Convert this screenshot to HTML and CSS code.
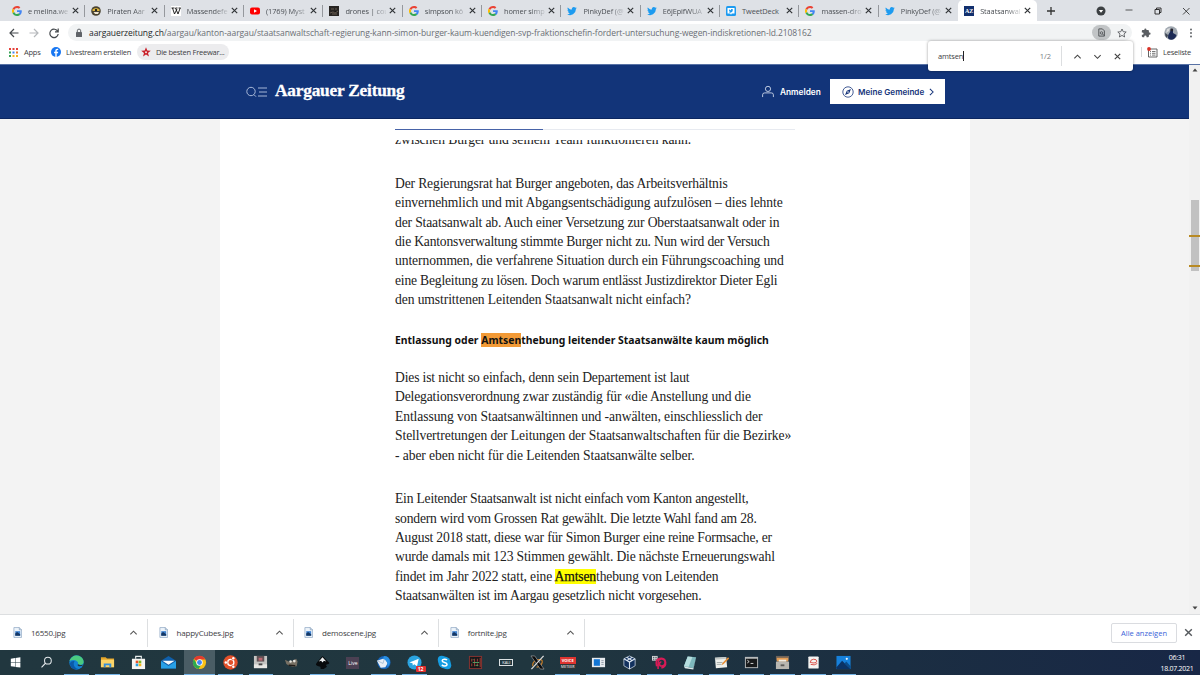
FILE: index.html
```html
<!DOCTYPE html>
<html lang="de">
<head>
<meta charset="utf-8">
<title>Aargauer Zeitung</title>
<link rel="stylesheet" href="styles.css">
</head>
<body>
<svg class="defs" aria-hidden="true">
  <symbol id="google" viewBox="0 0 48 48"><path fill="#EA4335" d="M24 9.5c3.5 0 6.7 1.2 9.200 3.600l6.900-6.900C35.900 2.400 30.500 0 24 0 14.600 0 6.500 5.400 2.600 13.200l8 6.200C12.400 13.700 17.700 9.500 24 9.500z"/><path fill="#4285F4" d="M47 24.600c0-1.600-.2-3.100-.4-4.600H24v9h12.900c-.6 3-2.300 5.500-4.800 7.200l7.700 6C44.400 38 47 32 47 24.600z"/><path fill="#FBBC05" d="M10.500 28.600a14.500 14.500 0 0 1 0-9.200l-8-6.200a24 24 0 0 0 0 21.600z"/><path fill="#34A853" d="M24 48c6.500 0 11.900-2.100 15.900-5.800l-7.700-6c-2.200 1.500-4.900 2.300-8.200 2.300-6.300 0-11.600-4.200-13.500-9.900l-8 6.200C6.500 42.600 14.600 48 24 48z"/></symbol>
  <symbol id="twitter" viewBox="0 0 24 24"><path fill="#1d9bf0" d="M23.600 4.900c-.8.4-1.700.6-2.700.8 1-.6 1.700-1.500 2-2.600-.9.5-1.900.9-3 1.100a4.800 4.800 0 0 0-8.200 4.400C7.800 8.400 4.300 6.500 1.900 3.600c-1.300 2.200-.7 5 1.500 6.400-.8 0-1.500-.2-2.200-.6 0 2.300 1.600 4.300 3.800 4.800-.7.200-1.400.2-2.200.1.600 1.900 2.400 3.300 4.500 3.300A9.600 9.600 0 0 1 .3 19.600 13.500 13.500 0 0 0 21.200 7.500c.9-.7 1.800-1.600 2.400-2.600z"/></symbol>
  <symbol id="x" viewBox="0 0 10 10"><path d="M2 2l6 6M8 2l-6 6" fill="none" stroke="currentColor" stroke-width="1.300"/></symbol>
  <symbol id="up" viewBox="0 0 10 10"><path d="M1.500 7L5 3.500 8.500 7" fill="none" stroke="currentColor" stroke-width="1.200"/></symbol>
  <symbol id="down" viewBox="0 0 10 10"><path d="M1.500 3.500L5 7l3.500-3.500" fill="none" stroke="currentColor" stroke-width="1.200"/></symbol>
  <symbol id="jpg" viewBox="0 0 10 12"><path d="M1 .5h6l2.500 2.500v8.500H1z" fill="#eef4fa" stroke="#8fa9c4" stroke-width=".8"/><path d="M7 .5V3h2.500" fill="none" stroke="#7793b0" stroke-width=".7"/><path d="M2.500 4.500h5.500v5H2.500z" fill="#3f82d0"/><path d="M2.500 7l2-1.500L8 8v1.500H2.500z" fill="#153765"/></symbol>
</svg>

<div class="window">
  <div class="tabstrip">
    <div class="tab"><svg class="fav"><use href="#google"/></svg><span>e melina.we</span><svg class="close"><use href="#x"/></svg></div>
    <div class="tab"><svg class="fav" viewBox="0 0 10 10"><circle cx="5" cy="5" r="4.800" fill="#4a4330"/><path d="M1 4q4-4 8 0L8 5H2z" fill="#e2b93c"/><path d="M2.500 6h5.500L7 8H4z" fill="#eee5cf"/><circle cx="5" cy="4" r="1.200" fill="#222"/></svg><span>Piraten Aar</span><svg class="close"><use href="#x"/></svg></div>
    <div class="tab"><svg class="fav" viewBox="0 0 10 10"><rect width="10" height="10" fill="#fff"/><path d="M.5 2h3M4.500 2h2M7.500 2h2.300M1.500 2l2 6L6 3M4.500 2l2.500 6L9.200 2" fill="none" stroke="#111" stroke-width=".9"/></svg><span>Massendefe</span><svg class="close"><use href="#x"/></svg></div>
    <div class="tab"><svg class="fav" viewBox="0 0 10 10"><rect y="1.500" width="10" height="7" rx="2" fill="#f00"/><path d="M4 3.300v3.400L7 5z" fill="#fff"/></svg><span>(1769) Myst</span><svg class="close"><use href="#x"/></svg></div>
    <div class="tab"><svg class="fav" viewBox="0 0 10 10"><rect width="10" height="10" fill="#272422"/><path d="M1 7l3-1 2 1 3-2M2 3h3M7 2v2M3 8h5" stroke="#776b5e" stroke-width=".8"/></svg><span>drones | cou</span><svg class="close"><use href="#x"/></svg></div>
    <div class="tab"><svg class="fav"><use href="#google"/></svg><span>simpson kö</span><svg class="close"><use href="#x"/></svg></div>
    <div class="tab"><svg class="fav"><use href="#google"/></svg><span>homer simp</span><svg class="close"><use href="#x"/></svg></div>
    <div class="tab"><svg class="fav"><use href="#twitter"/></svg><span>PinkyDef (@</span><svg class="close"><use href="#x"/></svg></div>
    <div class="tab"><svg class="fav"><use href="#twitter"/></svg><span>E6jEpifWUA</span><svg class="close"><use href="#x"/></svg></div>
    <div class="tab"><svg class="fav" viewBox="0 0 10 10"><rect width="10" height="10" rx="1.500" fill="#1d9bf0"/><path d="M1.500 2h7v5.500H5.800L5 8.800l-.8-1.300H1.500z" fill="#fff"/><use href="#twitter" x="2.700" y="2.500" width="4.600" height="4.600"/></svg><span>TweetDeck</span><svg class="close"><use href="#x"/></svg></div>
    <div class="tab"><svg class="fav"><use href="#google"/></svg><span>massen-dro</span><svg class="close"><use href="#x"/></svg></div>
    <div class="tab last"><svg class="fav"><use href="#twitter"/></svg><span>PinkyDef (@</span><svg class="close"><use href="#x"/></svg></div>
    <div class="tab active"><i class="fav az">AZ</i><span>Staatsanwal</span><svg class="close"><use href="#x"/></svg></div>
    <svg class="newtab" viewBox="0 0 10 10"><path d="M5 1v8M1 5h8" stroke="#333" stroke-width="1.300"/></svg>
    <div class="wincontrols">
      <svg viewBox="0 0 10 10"><circle cx="5" cy="5" r="4.500" fill="#3c4043"/><path d="M2.800 4h4.400L5 6.800z" fill="#fff"/></svg>
      <svg viewBox="0 0 10 10"><path d="M1.500 4h7" stroke="#333" stroke-width=".8"/></svg>
      <svg viewBox="0 0 10 10"><path d="M2 3.500h4.500V8H2zM3.500 3.500V2H8v4.500H6.500" fill="none" stroke="#222" stroke-width=".9"/></svg>
      <svg viewBox="0 0 10 10"><path d="M2 2l6.500 6.500M8.500 2L2 8.500" stroke="#222" stroke-width=".8"/></svg>
    </div>
  </div>

  <div class="toolbar">
    <svg class="nav" viewBox="0 0 12 12"><path d="M10.500 6h-8M6 2L2 6l4 4" fill="none" stroke="#45494d" stroke-width="1.200"/></svg>
    <svg class="nav" viewBox="0 0 12 12"><path d="M1.500 6h8M6 2l4 4-4 4" fill="none" stroke="#b5b8bb" stroke-width="1.200"/></svg>
    <svg class="nav" viewBox="0 0 12 12"><path d="M9.800 4.500A4.200 4.200 0 1 0 10.200 7M10.200 1.500v3.300H7" fill="none" stroke="#45494d" stroke-width="1.200"/></svg>
    <div class="omnibox">
      <svg class="lock" viewBox="0 0 8 10"><rect x="1" y="4" width="6" height="5" rx=".6" fill="#5f6368"/><path d="M2.300 4V2.800a1.700 1.700 0 0 1 3.400 0V4" fill="none" stroke="#5f6368"/></svg>
      <div class="url"><b>aargauerzeitung.ch</b>/aargau/kanton-aargau/staatsanwaltschaft-regierung-kann-simon-burger-kaum-kuendigen-svp-fraktionschefin-fordert-untersuchung-wegen-indiskretionen-ld.2108162</div>
      <div class="findchip"><svg viewBox="0 0 10 10"><path d="M2 1h4l2.200 2.200V9H2z" fill="none" stroke="#4a4d50"/><circle cx="5" cy="5.500" r="1.400" fill="none" stroke="#4a4d50" stroke-width=".9"/><path d="M6 6.500L8 8.500" stroke="#4a4d50"/></svg></div>
      <svg class="star" viewBox="0 0 10 10"><path d="M5 1l1.200 2.700 3 .3L7 6l.6 3L5 7.400 2.400 9 3 6 .8 4l3-.3z" fill="none" stroke="#4a4d50" stroke-width=".8"/></svg>
    </div>
    <svg class="puzzle" viewBox="0 0 24 24"><path fill="#5a5e62" d="M20.500 11H19V7a2 2 0 0 0-2-2h-4V3.500a2.500 2.500 0 0 0-5 0V5H4a2 2 0 0 0-2 2v3.800h1.500a2.700 2.700 0 0 1 0 5.400H2V20a2 2 0 0 0 2 2h3.800v-1.500a2.700 2.700 0 0 1 5.400 0V22H17a2 2 0 0 0 2-2v-4h1.500a2.500 2.500 0 0 0 0-5z"/></svg>
    <svg class="avatar" viewBox="0 0 14 14"><circle cx="7" cy="7" r="6.800" fill="#a0a8b0"/><path d="M4 12q0-4 2-6l1-3 2 1v3l3.500 2q-1.500 5-5.500 4.800Q4.500 13.500 4 12z" fill="#1c2a55"/><path d="M1 7l3 2-1 3Q.8 10 1 7z" fill="#3f4652"/><path d="M3 3l3-1-1 3-3 2z" fill="#d9dadb"/><circle cx="7.800" cy="4" r="1.400" fill="#24232d"/></svg>
    <svg class="dots" viewBox="0 0 4 12"><circle cx="2" cy="2.500" r=".9"/><circle cx="2" cy="6" r=".9"/><circle cx="2" cy="9.500" r=".9"/></svg>
  </div>

  <div class="bookmarks">
    <svg class="apps" viewBox="0 0 9 9"><path fill="#e5413a" d="M0 0h2v2H0zM3.500 0h2v2h-2zM7 0h2v2H7z"/><path fill="#37a456" d="M0 3.500h2v2H0z"/><path fill="#4285f4" d="M3.500 3.500h2v2h-2z"/><path fill="#e8792c" d="M7 3.500h2v2H7z"/><path fill="#37a456" d="M0 7h2v2H0z"/><path fill="#f2b51d" d="M3.500 7h2v2h-2zM7 7h2v2H7z"/></svg>
    <span class="bm-apps">Apps</span>
    <svg class="fb" viewBox="0 0 10 10"><circle cx="5" cy="5" r="5" fill="#1877f2"/><path d="M4.300 10V6.200H3.100V4.800h1.200V3.700c0-1.300.8-2 2-2h.9V3h-.7c-.6 0-.8.3-.8.800v1h1.500l-.2 1.400H5.700V10z" fill="#fff"/></svg>
    <span class="bm-live">Livestream erstellen</span>
    <div class="bm-chip"><svg viewBox="0 0 10 10"><path d="M5 .3l1.300 3.300 3.500.2L7 6l1 3.600L5 7.500 2 9.600 3 6 .2 3.800l3.500-.2z" fill="#c8202a"/><circle cx="5" cy="5.200" r="1" fill="#f6dcdc"/></svg><span>Die besten Freewar...</span></div>
    <div class="reading"><svg viewBox="0 0 11 11"><path d="M1.500 2h8.500v8H1.500z" fill="#fff" stroke="#555" stroke-width=".9"/><path d="M3 4.500h1M5 4.500h3.500M3 6.300h1M5 6.300h3.500M3 8.100h1M5 8.100h3.500" stroke="#555" stroke-width=".8"/><circle cx="2" cy="2" r="1.900" fill="#d93025"/></svg><span>Leseliste</span></div>
  </div>

  <div class="findbar">
    <span class="query">amtsen</span><i class="caret"></i><span class="count">1/2</span>
    <svg><use href="#up"/></svg><svg><use href="#down"/></svg><svg><use href="#x"/></svg>
  </div>

  <div class="viewport">
    <div class="page">
      <header class="site">
        <svg class="menu" viewBox="0 0 22 12"><circle cx="5" cy="5.500" r="4.200"/><path d="M8 8.700l2 2M12 2h9M13 6h8M12 10h9"/></svg>
        <div class="logo">Aargauer Zeitung</div>
        <div class="login"><svg viewBox="0 0 14 14"><circle cx="7" cy="4.200" r="2.800"/><path d="M1.200 13V10.500q0-2 2.300-2h7q2.300 0 2.300 2V13"/></svg>Anmelden</div>
        <div class="gemeinde"><svg viewBox="0 0 12 12"><circle cx="6" cy="6" r="5.200" fill="none" stroke="#15347a" stroke-width=".8"/><path d="M9 3L7.200 7.200 3 9l1.800-4.200z" fill="#15347a"/><circle cx="6" cy="6" r=".8" fill="#fff"/></svg><span>Meine Gemeinde</span><svg class="chev" viewBox="0 0 6 10"><path d="M1 1l4 4-4 4" fill="none" stroke="#15347a" stroke-width="1.300"/></svg></div>
      </header>
      <main>
        <div class="progress"><i></i></div>
        <article>
          <p class="cut">zwischen Burger und seinem Team funktionieren kann.</p>
          <p>Der Regierungsrat hat Burger angeboten, das Arbeitsverhältnis<br><span class="loose">einvernehmlich und mit Abgangsentschädigung aufzulösen – dies lehnte</span><br>der Staatsanwalt ab. Auch einer Versetzung zur Oberstaatsanwalt oder in<br><span class="tight">die Kantonsverwaltung stimmte Burger nicht zu. Nun wird der Versuch</span><br><span class="loose">unternommen, die verfahrene Situation durch ein Führungscoaching und</span><br><span class="tight">eine Begleitung zu lösen. Doch warum entlässt Justizdirektor Dieter Egli</span><br><span class="loose">den umstrittenen Leitenden Staatsanwalt nicht einfach?</span></p>
          <h2>Entlassung oder <mark class="current">Amtsen</mark>thebung leitender Staatsanwälte kaum möglich</h2>
          <p>Dies ist nicht so einfach, denn sein Departement ist laut<br>Delegationsverordnung zwar zuständig für «die Anstellung und die<br><span class="loose">Entlassung von Staatsanwältinnen und -anwälten, einschliesslich der</span><br><span class="loose">Stellvertretungen der Leitungen der Staatsanwaltschaften für die Bezirke»</span><br><span class="loose">- aber eben nicht für die Leitenden Staatsanwälte selber.</span></p>
          <p><span class="tight">Ein Leitender Staatsanwalt ist nicht einfach vom Kanton angestellt,</span><br><span class="tight">sondern wird vom Grossen Rat gewählt. Die letzte Wahl fand am 28.</span><br><span class="tight">August 2018 statt, diese war für Simon Burger eine reine Formsache, er</span><br>wurde damals mit 123 Stimmen gewählt. Die nächste Erneuerungswahl<br>findet im Jahr 2022 statt, eine <mark>Amtsen</mark>thebung von Leitenden<br>Staatsanwälten ist im Aargau gesetzlich nicht vorgesehen.</p>
        </article>
      </main>
    </div>
    <div class="scrollbar">
      <svg viewBox="0 0 6 4"><path d="M.5 3.500h5L3 .5z"/></svg>
      <div class="track"><div class="thumb"><i></i><i></i></div></div>
      <svg viewBox="0 0 6 4"><path d="M.5.5h5L3 3.500z"/></svg>
    </div>
  </div>

  <div class="downloads">
    <div class="dl"><svg class="file"><use href="#jpg"/></svg><span>16550.jpg</span><svg class="chev"><use href="#up"/></svg></div>
    <div class="dl"><svg class="file"><use href="#jpg"/></svg><span>happyCubes.jpg</span><svg class="chev"><use href="#up"/></svg></div>
    <div class="dl"><svg class="file"><use href="#jpg"/></svg><span>demoscene.jpg</span><svg class="chev"><use href="#up"/></svg></div>
    <div class="dl"><svg class="file"><use href="#jpg"/></svg><span>fortnite.jpg</span><svg class="chev"><use href="#up"/></svg></div>
    <div class="showall">Alle anzeigen</div>
    <svg class="dlclose"><use href="#x"/></svg>
  </div>

  <div class="taskbar">
    <div class="app"><svg viewBox="0 0 16 16"><path d="M3 4l4.500-.7v4.400H3zM8 3.200L13.200 2.500v5.200H8zM3 8.200h4.500v4.400L3 12zM8 8.200h5.200v5.200L8 12.700z" fill="#fff"/></svg></div>
    <div class="app"><svg viewBox="0 0 16 16"><circle cx="9.500" cy="6" r="3.600" fill="none" stroke="#e6ebee" stroke-width="1.100"/><path d="M7 8.700l-4.300 4.600" stroke="#e6ebee" stroke-width="1.200"/></svg></div>
    <div class="app run"><svg viewBox="0 0 16 16"><circle cx="8" cy="8" r="7.700" fill="#1382d3"/><path d="M.5 6.500C2 1 8-.8 12 1.500c3 1.700 4.500 5.500 3 7.700-1 1.300-4.500 1.500-5.500.3C11 6.500 5 3.500.5 6.500z" fill="#4acb80"/><path d="M6 7c-2 2-1 7 4 8-5 1.500-9-2-9-6 1-2.500 4-3 5-2z" fill="#0b5aa8"/><path d="M9.500 9.500c1.500 1.500 4 1.200 6 .5q-2 2.500-5 2-2-.5-1-2.500z" fill="#21363f"/></svg></div>
    <div class="app run"><svg viewBox="0 0 16 16"><path d="M1 2.500h5l1.500 1.300H15V13H1z" fill="#e5a62a"/><path d="M1 5h14v8H1z" fill="#fcd568"/><path d="M4 13V9h8v4h-2v-2H6v2z" fill="#338fdb"/></svg></div>
    <div class="app"><svg viewBox="0 0 16 16"><path d="M5 4V1.500h6V4" fill="none" stroke="#e9eeee" stroke-width="1.200"/><path d="M1 4h14v11H1z" fill="#f5f5f3"/><path d="M5 6h2.800v2.800H5z" fill="#ef5026"/><path d="M8.200 6H11v2.800H8.200z" fill="#7db928"/><path d="M5 9.200h2.800V12H5z" fill="#25a1e8"/><path d="M8.200 9.200H11V12H8.200z" fill="#f5b61d"/></svg></div>
    <div class="app"><svg viewBox="0 0 16 16"><path d="M0 6l8-5 8 5v8.500H0z" fill="#0f5faa"/><path d="M1.500 6h13L8 10.500z" fill="#f4f8fb"/><path d="M0 6.500l8 5.200 8-5.200v8H0z" fill="#28a0e6"/></svg></div>
    <div class="app run focus"><svg viewBox="0 0 16 16"><circle cx="8" cy="8" r="7" fill="#fbc116"/><path d="M8 8L2 4.300A7 7 0 0 1 14.200 4.700L8 4.800z" fill="#e33b2e"/><path d="M2 4.300A7 7 0 0 0 7 15l3-5.200-4.500.3z" fill="#2da94f"/><circle cx="8" cy="8" r="3.400" fill="#fff"/><circle cx="8" cy="8" r="2.600" fill="#4285f4"/></svg></div>
    <div class="app run"><svg viewBox="0 0 16 16"><circle cx="8" cy="8" r="7.700" fill="#e2502a"/><circle cx="8.300" cy="8" r="3.300" fill="none" stroke="#fff" stroke-width="1.400"/><path d="M10 5l1-2M4.500 8H3M10 11l1 2" stroke="#e2502a" stroke-width="2.500"/><g fill="#fff"><circle cx="11" cy="3.500" r="1.300"/><circle cx="3" cy="8" r="1.300"/><circle cx="11" cy="12.500" r="1.300"/></g></svg></div>
    <div class="app run"><svg viewBox="0 0 16 16"><rect x="1" y="1" width="14" height="13" fill="#c4c4c2"/><rect x="4" y="1" width="8" height="6" fill="#5d5053"/><path d="M6 3h4v3H6z" fill="#bc6770"/><path d="M1 10h14v4H1z" fill="#e6e6e3"/><path d="M6 9h4v2H6z" fill="#454545"/></svg></div>
    <div class="app"><svg viewBox="0 0 16 16"><path d="M1 5l4 2 4-1 4-2 1.500 3-1 5-4 .5-4-1-3-2z" fill="#777064"/><circle cx="7" cy="7" r="1.300" fill="#e5e4de"/><circle cx="11" cy="6.500" r="1.400" fill="#e5e4de"/><path d="M5 11l7 .5" stroke="#211d19" stroke-width="1.600"/></svg></div>
    <div class="app run"><svg viewBox="0 0 16 16"><path d="M8 1l7 7c1 2-2 1.500-3 2.500s2 1.500 0 2.500-2 2-4 2-3-1-2-2-5-1-5-3c0-1 6-8 7-9z" fill="#080b0d"/><path d="M8 2.500L12 7 9.500 6 8 8 6.500 6 4 7z" fill="#eef0f1"/></svg></div>
    <div class="app"><div class="badge live">Live</div></div>
    <div class="app run"><svg viewBox="0 0 16 16"><circle cx="8.500" cy="8" r="7" fill="#1767bd"/><path d="M1 6l8-2.500 3.500 5-2.500 4.500-5 .5z" fill="#e9eff6"/><path d="M1 6l6.500 3L9 3.500" fill="none" stroke="#9eb8d0" stroke-width=".8"/><path d="M9 1c6 0 8 8 3 12 1-5-1-8-5-9z" fill="#2990e4"/></svg></div>
    <div class="app run"><svg viewBox="0 0 16 16"><circle cx="8" cy="8" r="7.500" fill="#2aa3df"/><path d="M2.500 8l10-4-1.800 8-3-2.200-1.500 1.500-.3-2.600z" fill="#fff"/></svg><b class="count12">12</b></div>
    <div class="app"><svg viewBox="0 0 16 16"><circle cx="8" cy="8" r="6.500" fill="#159de2"/><circle cx="5" cy="5" r="4.200" fill="#159de2"/><circle cx="11" cy="11" r="4.200" fill="#159de2"/><path d="M10.700 5.500C9.500 4 5.500 4 5.500 6.200c0 2.500 5.200 1.300 5.200 3.700 0 2.300-4.200 2.400-5.500.5" fill="none" stroke="#fff" stroke-width="1.600"/></svg></div>
    <div class="app"><svg viewBox="0 0 16 16"><rect x="1.500" y="1.500" width="13" height="13" fill="#16191b" stroke="#8a3430"/><path d="M4 4v3M4 9v3M7 4v8M10 4v3M10 9v3M13 3v10" stroke="#bf4238" stroke-width=".9"/><path d="M5 8h7M5 5h1M8 11h3" stroke="#55a264"/></svg></div>
    <div class="app"><div class="badge kali">KALI</div></div>
    <div class="app"><svg viewBox="0 0 16 16"><path d="M3 12Q2 7 8 5q6-1 5 3t-6 5" fill="none" stroke="#ce7d20" stroke-width="1.200"/><path d="M1 1h4l10 14h-4z" fill="#0b0b0b" stroke="#b5b5b5" stroke-width=".6"/><path d="M14.500 1L1.500 15" stroke="#ddd" stroke-width="1.300"/></svg></div>
    <div class="app run"><div class="badge voice"><b>VOICE</b><span>METEER</span></div></div>
    <div class="app run"><svg viewBox="0 0 16 16"><rect x="1" y="3" width="14" height="10" fill="#e7ebef"/><rect x="3" y="4.500" width="6.500" height="7" fill="#1276d5"/><path d="M11 6h2.500M11 8h2.500M11 10h2.500" stroke="#7d8995" stroke-width=".8"/></svg></div>
    <div class="app run"><svg viewBox="0 0 16 16"><path d="M8 1l6 3v7.500L8 15l-6-3.500V4z" fill="#12315e" stroke="#cfdae8" stroke-width=".8"/><path d="M2 4l6 3.500L14 4M8 7.500V15M5 2.500l6 3.500M11 2.500L5 6" fill="none" stroke="#d9e4ef" stroke-width="1.200"/></svg></div>
    <div class="app run"><svg viewBox="0 0 16 16"><path d="M0 1h6v5H0z" fill="#d6d8db"/><path d="M1 2.500h1.500M3.500 2.500H5M1 4.500h1.500M3.500 4.500H5" stroke="#39434d"/><path d="M6.500 15V8a3.700 3.700 0 1 1 3.700 3.700Q8 11.700 8 9.500T10 7.500M5 12Q3 5 8 3.700q6-1 6.500 4T10 13.700" fill="none" stroke="#d81b56" stroke-width="1.700"/></svg></div>
    <div class="app run"><svg viewBox="0 0 16 16"><path d="M5 1.500l9 1L11 14 1 12z" fill="#7eb8bd"/><path d="M5 1.500l5 .5-4 10.500L1 12z" fill="#b6dedf"/><path d="M11 14L1 12l1 2 9 1.500 3-13z" fill="#dce9ea"/></svg></div>
    <div class="app run"><svg viewBox="0 0 16 16"><path d="M1 3l12-1 1 11-12 1z" fill="#eef0ec"/><path d="M1 3l12-1v2L1 5z" fill="#c2c7c5"/><path d="M3 8h6M3 10h5" stroke="#a4aba9"/><path d="M8 11l1-2.500 6-6 1.300 1.200-6 6z" fill="#e58d34"/></svg></div>
    <div class="app run"><svg viewBox="0 0 16 16"><rect x="1" y="2" width="14" height="12" fill="#b7babb"/><rect x="2" y="4" width="12" height="9" fill="#17191b"/><path d="M3.500 5.500l2 1.500-2 1.500M7 9h3" fill="none" stroke="#eee" stroke-width=".9"/></svg></div>
    <div class="app run"><svg viewBox="0 0 16 16"><path d="M1 1h14v5H1z" fill="#6f6359"/><path d="M2 3h12v4H2z" fill="#e29c54"/><path d="M1 7h14v8H1z" fill="#b8b6b0"/><path d="M4 5h8v2H4z" fill="#f1ede3"/><path d="M6 10h4v2H6z" fill="#5d5c5a"/></svg></div>
    <div class="app run"><svg viewBox="0 0 16 16"><rect x="2.500" y="1.500" width="11" height="13" rx="1" fill="#f5f4f2"/><path d="M4.500 8.500q0-4 3.500-4t3.500 2-3 2-3.500-1M5 10q4 1.500 7-1" fill="none" stroke="#d6382f" stroke-width=".9"/></svg></div>
    <div class="app run"><svg viewBox="0 0 16 16"><rect x=".5" y="1" width="15" height="14" fill="#1681dc"/><path d="M.5 13L6.500 6l9 9H.5z" fill="#0b3366"/><path d="M9 9l2-2 4.500 5v3z" fill="#0b4c8b"/><circle cx="11.500" cy="4" r="1.200" fill="#e9f5fc"/></svg></div>
    <div class="clock"><span>06:31</span><span>18.07.2021</span></div>
  </div>
</div>
</body>
</html>
```
FILE: styles.css
```css
* { box-sizing: border-box; }
body { margin: 0; font-family: "Open Sans", "Noto Sans", sans-serif; color: #3c4043; }
svg { flex: none; display: block; }
.defs { position: absolute; width: 0; height: 0; }
.window { position: relative; width: 1200px; height: 675px; display: flex; flex-direction: column; overflow: hidden; background: #fff; }

/* tabs */
.tabstrip { height: 21px; flex: none; display: flex; align-items: stretch; padding-left: 6px; background: #dee1e6; }
.tab { width: 79.350px; flex: none; display: flex; align-items: center; padding-left: 6px; position: relative; font-size: 7.400px; letter-spacing: -.1px; color: #4b4f54; }
.tab:not(.last):not(.active)::after { content: ""; position: absolute; right: 0; top: 5px; width: 1px; height: 12px; background: #95989d; }
.fav { width: 10px; height: 10px; flex: none; margin-right: 6px; }
.tab span { width: 41px; white-space: nowrap; line-height: 12px; -webkit-mask-image: linear-gradient(90deg, #000 65%, rgba(0,0,0,.15)); mask-image: linear-gradient(90deg, #000 65%, rgba(0,0,0,.15)); }
.tab:nth-child(10) span { -webkit-mask-image: none; mask-image: none; }
.close { width: 9px; height: 9px; margin-left: 2px; color: #303336; }
.tab.active { background: #fff; border-radius: 5px 5px 0 0; }
.az { background: #12306e; color: #fff; font: bold 6px/10px "Liberation Serif", serif; text-align: center; }
.newtab { width: 10px; height: 10px; align-self: center; margin-left: 9px; }
.wincontrols { margin-left: auto; display: flex; align-items: center; gap: 18.500px; padding-right: 9px; }
.wincontrols svg { width: 10px; height: 10px; }

/* toolbar */
.toolbar { height: 23px; flex: none; display: flex; align-items: center; padding-left: 8px; }
.nav { width: 12px; height: 12px; margin-right: 8px; }
.omnibox { width: 1064px; height: 17px; border-radius: 9px; background: #f1f3f4; display: flex; align-items: center; padding: 0 5px 0 7px; }
.lock { width: 8px; height: 10px; margin-right: 6px; }
.url { flex: 1; white-space: nowrap; font-size: 8.500px; letter-spacing: -.078px; color: #6b6f74; }
.url b { font-weight: 400; color: #25282b; }
.findchip { width: 19px; height: 15px; border-radius: 8px; background: #c1c4c6; display: flex; align-items: center; justify-content: center; margin-right: 6px; }
.findchip svg { width: 9px; height: 9px; }
.star { width: 10px; height: 10px; }
.puzzle { width: 10px; height: 10px; margin-left: 9px; }
.avatar { width: 14px; height: 14px; margin-left: 13px; }
.dots { width: 4px; height: 12px; margin-left: 11px; fill: #55595d; }

/* bookmarks */
.bookmarks { height: 21px; flex: none; display: flex; align-items: center; padding: 0 9px; padding-bottom: 4px; font-size: 7.500px; letter-spacing: -.25px; border-bottom: 1px solid #5872a5; }
.apps { width: 9px; height: 9px; margin-right: 6px; }
.bm-apps { width: 27px; }
.fb { width: 10px; height: 10px; margin-right: 5px; }
.bm-live { width: 71px; white-space: nowrap; letter-spacing: -.28px; }
.bm-chip { width: 92px; height: 16px; border-radius: 8px; background: #ececee; display: flex; align-items: center; padding-left: 4px; white-space: nowrap; }
.bm-chip svg { width: 10px; height: 10px; margin-right: 5px; }
.reading { margin-left: auto; height: 10px; display: flex; align-items: center; gap: 5px; border-left: 1px solid #d5d7d9; padding-left: 5px; }
.reading svg { width: 11px; height: 11px; }

/* find-in-page popup floats over the page */
.findbar { position: absolute; z-index: 3; left: 928px; top: 41px; width: 205px; height: 30px; background: #fff; border-radius: 3px; box-shadow: 0 0 3px rgba(0,0,0,.4); display: flex; align-items: center; padding-left: 10px; font-size: 7.500px; }
.query { letter-spacing: -.15px; }
.caret { width: 1px; height: 10px; background: #222; }
.count { margin-left: auto; height: 20px; line-height: 20px; padding-right: 10px; border-right: 1px solid #dcdee0; color: #777b80; }
.findbar svg { width: 9px; height: 9px; margin: 0 0 0 11px; color: #444; }
.findbar svg:last-child { margin-right: 11px; }

/* page */
.viewport { height: 549px; flex: none; display: flex; }
.page { width: 1189px; background: #f3f3f3; overflow: hidden; }
.site { height: 54px; background: #123479; border-bottom: 1px solid #0b2660; display: flex; align-items: center; padding-left: 246px; color: #fff; font-family: Inter, "Noto Sans", sans-serif; }
.menu { width: 22px; height: 12px; fill: none; stroke: #b7c5e1; stroke-width: .9; }
.logo { width: 487px; margin-left: 7px; padding-bottom: 1px; margin-right: 1px; font: bold 17.300px/22px "Liberation Serif", serif; letter-spacing: -.2px; -webkit-text-stroke: .3px #fff; }
.login { width: 67px; display: flex; align-items: center; gap: 5px; margin-left: -2px; font-size: 8.300px; font-weight: 600; white-space: nowrap; }
.login svg { width: 14px; height: 13px; fill: none; stroke: #dce4f3; stroke-width: .9; }
.gemeinde { width: 115px; height: 25.500px; margin-left: 2px; background: #fff; color: #15347a; display: flex; align-items: center; padding-left: 12px; font-size: 8.150px; font-weight: 600; white-space: nowrap; }
.gemeinde svg { width: 12px; height: 12px; margin-right: 4px; }
.gemeinde .chev { width: 5px; height: 8px; margin: 0 0 0 5px; }
main { width: 750px; height: 496px; margin-left: 220px; padding: 10px 175px 0; background: #fff; }
.progress { height: 1px; background: #e7eaf0; }
.progress i { display: block; width: 148px; height: 1px; background: #4763a8; }
article { height: 484px; margin-top: 10px; overflow: hidden; white-space: nowrap; }
article p { margin: 0 0 24.400px; font: 13.600px/19.370px "Liberation Serif", serif; letter-spacing: -.145px; color: #222; }
.tight { letter-spacing: -.195px; }
.loose { letter-spacing: -.09px; }
article .cut { margin-top: -10px; letter-spacing: -.08px; }
article h2 { margin: -2.600px 0 17.500px; font: bold 10.400px/19.370px "Noto Sans", sans-serif; color: #111; }
mark { background: #ff0; color: #111; -webkit-text-stroke: .25px #111; }
mark.current { background: #f29a36; -webkit-text-stroke: 0; }
.scrollbar { width: 11px; background: #f1f1f1; display: flex; flex-direction: column; align-items: center; padding: 3px 0 4px; }
.scrollbar svg { width: 6px; height: 4px; fill: #444; }
.track { flex: 1; width: 11px; padding: 128px 1.500px 0; }
.thumb { height: 71px; background: #c1c1c1; padding-top: 35px; display: flex; flex-direction: column; gap: 28px; }
.thumb i { height: 2px; margin: 0 -1.500px; background: #b88a24; }

/* downloads */
.downloads { height: 36px; flex: none; display: flex; align-items: center; border-top: 1px solid #dcdee0; font-size: 8px; letter-spacing: -.2px; }
.dl { width: 145.600px; height: 28px; flex: none; display: flex; align-items: center; padding-left: 10.500px; border-right: 1px solid #dddfe1; }
.dl:first-child { width: 148px; padding-left: 13px; }
.file { width: 9px; height: 11px; margin-right: 9px; }
.dl .chev { width: 9px; height: 9px; margin: 0 9px 0 auto; color: #555; }
.showall { width: 66px; height: 20px; margin-left: auto; border: 1px solid #dadce0; border-radius: 2px; color: #3a64d8; text-align: center; font-size: 7.500px; line-height: 18px; letter-spacing: 0; }
.dlclose { width: 11px; height: 11px; margin: 0 6px; color: #55595d; }

/* taskbar */
.taskbar { height: 25px; flex: none; display: flex; background: linear-gradient(90deg, #21373f, #20363f 45%, #1b2e42 75%, #182746); }
.app { width: 30.700px; flex: none; position: relative; display: flex; align-items: center; justify-content: center; }
.app svg { width: 15px; height: 15px; }
.app.run::after { content: ""; position: absolute; left: 3px; right: 3px; bottom: 0; height: 1.500px; background: #76b5e8; }
.app.focus { background: #4a5d65; }
.app.focus::after { left: 0; right: 0; }
.badge { font-size: 5px; line-height: 12px; color: #fff; text-align: center; }
.live { width: 13px; height: 12px; background: #4b4053; }
.kali { width: 14px; height: 7px; border: 1px solid #dbe0e2; font-size: 4px; line-height: 5px; }
.voice { width: 16px; font-size: 4px; line-height: 5px; }
.voice b { display: block; background: #df3430; line-height: 7px; }
.voice span { display: block; background: #2e3438; font-size: 3.600px; }
.count12 { position: absolute; right: 4px; bottom: 3px; width: 10px; background: #e32e2d; color: #fff; font-size: 5px; line-height: 6px; text-align: center; border-radius: 1px; }
.clock { margin-left: auto; padding: 2px 4px 0 0; display: flex; flex-direction: column; align-items: center; width: 42px; color: #fff; font-size: 7px; line-height: 11px; letter-spacing: -.25px; }
```
